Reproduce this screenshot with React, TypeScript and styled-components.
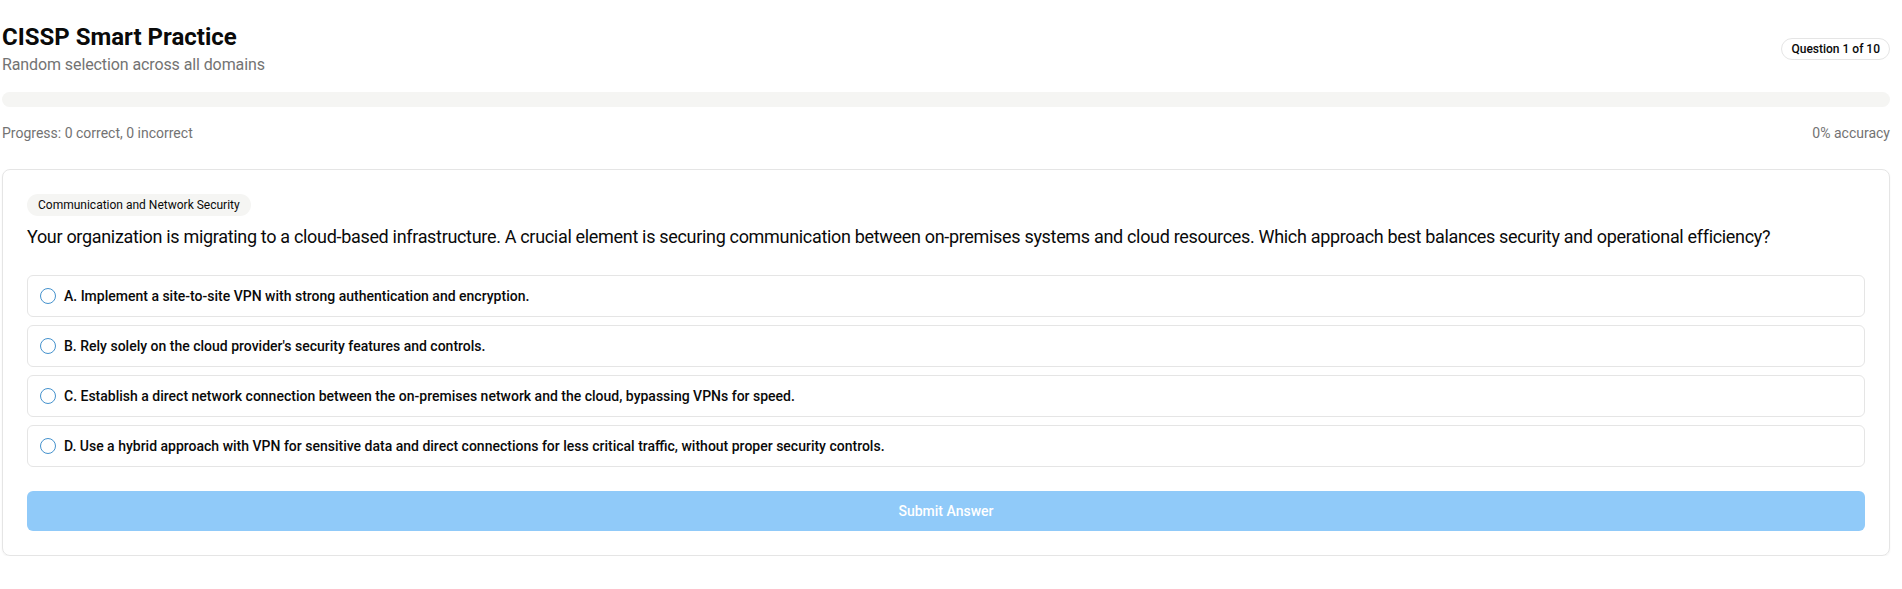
import styled, { createGlobalStyle } from "styled-components";

const GlobalStyle = createGlobalStyle`
  body {
    margin: 0;
    background: #ffffff;
    font-family: Roboto, "Noto Sans", sans-serif;
    color: #0a0a0a;
  }
`;

const options = [
  "A. Implement a site-to-site VPN with strong authentication and encryption.",
  "B. Rely solely on the cloud provider's security features and controls.",
  "C. Establish a direct network connection between the on-premises network and the cloud, bypassing VPNs for speed.",
  "D. Use a hybrid approach with VPN for sensitive data and direct connections for less critical traffic, without proper security controls.",
];

const App = () => {
  const correct = 0;
  const incorrect = 0;
  const answered = correct + incorrect;
  const accuracy = answered ? Math.round((correct / answered) * 100) : 0;

  return (
    <Page>
      <GlobalStyle />
      <Header>
        <div>
          <Title>CISSP Smart Practice</Title>
          <Subtitle>Random selection across all domains</Subtitle>
        </div>
        <CountBadge>Question 1 of 10</CountBadge>
      </Header>

      <ProgressTrack>
        <ProgressFill style={{ width: `${(answered / 10) * 100}%` }} />
      </ProgressTrack>

      <StatsRow>
        <span>
          Progress: {correct} correct, {incorrect} incorrect
        </span>
        <span>{accuracy}% accuracy</span>
      </StatsRow>

      <Card>
        <DomainChip>Communication and Network Security</DomainChip>
        <Question>
          Your organization is migrating to a cloud-based infrastructure. A crucial element is securing
          communication between on-premises systems and cloud resources. Which approach best balances
          security and operational efficiency?
        </Question>

        <OptionList>
          {options.map((text) => (
            <Option key={text}>
              <Radio />
              <OptionText>{text}</OptionText>
            </Option>
          ))}
        </OptionList>

        <SubmitButton disabled>Submit Answer</SubmitButton>
      </Card>
    </Page>
  );
};

const Page = styled.div`
  width: 1888px;
  margin-left: 2px;
  padding-top: 21px;
`;

const Header = styled.div`
  display: flex;
  align-items: center;
  justify-content: space-between;
`;

const Title = styled.h1`
  margin: 0;
  font-size: 24px;
  line-height: 32px;
  font-weight: 700;
  color: #0a0a0a;
`;

const Subtitle = styled.p`
  margin: 0;
  font-size: 16px;
  line-height: 24px;
  letter-spacing: -0.1px;
  color: #737373;
`;

const CountBadge = styled.span`
  display: inline-flex;
  align-items: center;
  height: 22px;
  padding: 0 9px;
  box-sizing: border-box;
  border: 1px solid #e5e5e5;
  border-radius: 999px;
  font-size: 12px;
  font-weight: 500;
  color: #0a0a0a;
`;

const ProgressTrack = styled.div`
  margin-top: 15px;
  height: 15px;
  border-radius: 999px;
  background: #f5f5f3;
  overflow: hidden;
`;

const ProgressFill = styled.div`
  height: 100%;
  background: #171717;
`;

const StatsRow = styled.div`
  display: flex;
  justify-content: space-between;
  margin-top: 16px;
  font-size: 14px;
  line-height: 20px;
  color: #737373;
`;

const Card = styled.div`
  margin-top: 26px;
  padding: 24px;
  border: 1px solid #e5e5e5;
  border-radius: 8px;
  box-shadow: 0 1px 2px rgba(0, 0, 0, 0.05);
`;

const DomainChip = styled.span`
  display: inline-flex;
  align-items: center;
  height: 22px;
  padding: 0 11px;
  border-radius: 999px;
  background: #f5f5f3;
  font-size: 12px;
  font-weight: 400;
  color: #0a0a0a;
`;

const Question = styled.h2`
  margin: 7px 0 0;
  font-size: 18px;
  line-height: 28px;
  font-weight: 400;
  letter-spacing: -0.32px;
  color: #0a0a0a;
`;

const OptionList = styled.div`
  display: flex;
  flex-direction: column;
  gap: 8px;
  margin-top: 24px;
`;

const Option = styled.label`
  display: flex;
  align-items: center;
  gap: 8px;
  height: 42px;
  box-sizing: border-box;
  padding: 0 12px;
  border: 1px solid #e5e5e5;
  border-radius: 6px;
  cursor: pointer;
`;

const Radio = styled.span`
  width: 16px;
  height: 16px;
  box-sizing: border-box;
  border: 1.5px solid #4592cd;
  border-radius: 50%;
  flex-shrink: 0;
`;

const OptionText = styled.span`
  font-size: 14px;
  font-weight: 500;
  color: #0a0a0a;
`;

const SubmitButton = styled.button`
  display: block;
  width: 100%;
  height: 40px;
  margin-top: 24px;
  border: none;
  border-radius: 6px;
  background: #90caf9;
  color: #ffffff;
  font-family: inherit;
  font-size: 14px;
  font-weight: 500;

  &:disabled {
    cursor: not-allowed;
  }
`;

export default App;
